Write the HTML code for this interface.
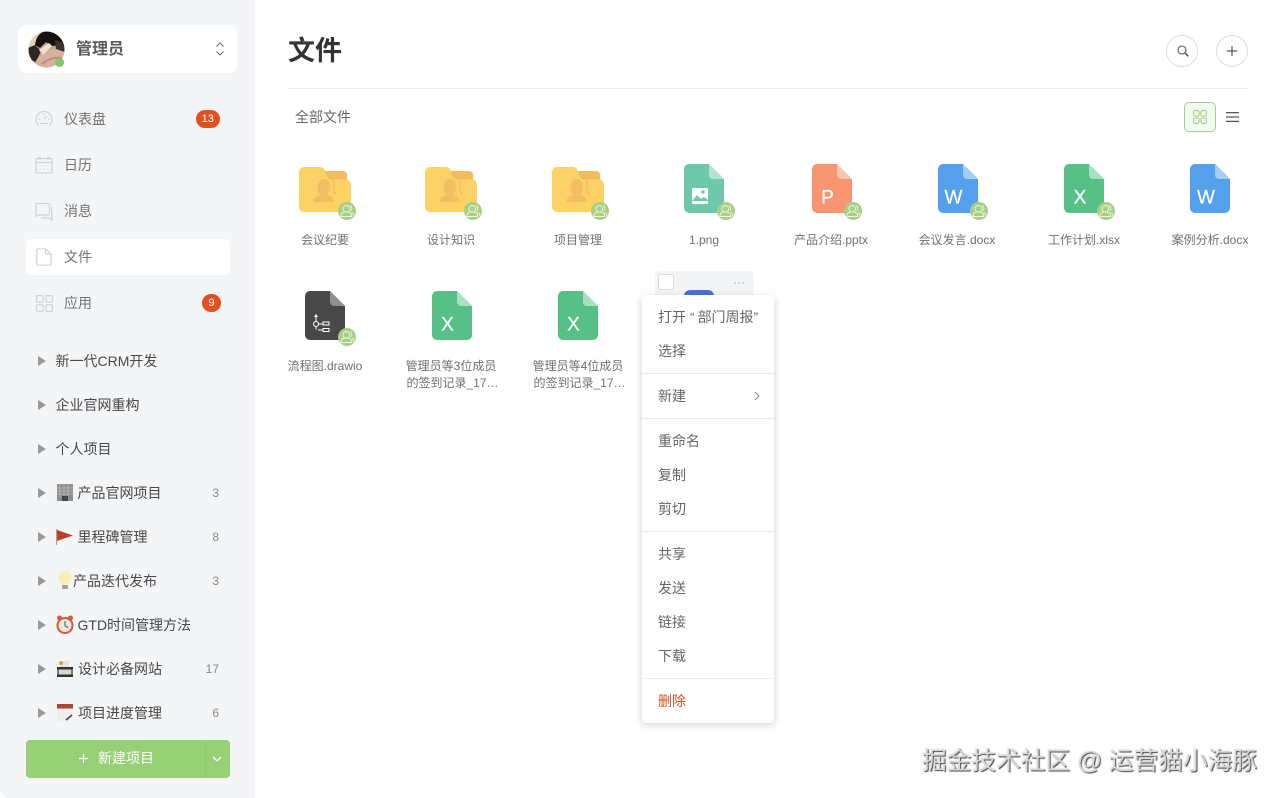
<!DOCTYPE html>
<html lang="zh">
<head>
<meta charset="utf-8">
<title>文件</title>
<style>
html,body{margin:0;padding:0;width:1280px;height:798px;overflow:hidden;background:#fff;font-family:"Liberation Sans","Noto Sans CJK SC",sans-serif;color:#555}
#w{position:absolute;left:0;top:0;width:1280px;height:798px;overflow:hidden;filter:blur(.3px)}
.a{position:absolute}
.t{position:absolute;white-space:nowrap;line-height:20px;height:20px}
.side{position:absolute;left:0;top:0;width:255px;height:798px;background:#f3f5f7;border-bottom-left-radius:10px}
.nav{font-size:14px;color:#737373;left:64px}
.prj{font-size:14px;color:#484848}
.cnt{font-size:12px;color:#8a8a8a;right:1061px;text-align:right}
.badge{position:absolute;background:#e3501f;color:#fff;font-size:11px;line-height:18px;height:18px;text-align:center;border-radius:9px}
.tri{position:absolute;left:38px;width:0;height:0;border-left:8px solid #999;border-top:5px solid transparent;border-bottom:5px solid transparent}
.lbl{position:absolute;width:126px;text-align:center;font-size:12px;color:#707070;line-height:17px;white-space:nowrap}
.lbl span{position:relative;left:1.500px}
.mi{position:absolute;left:16px;font-size:14px;color:#666;line-height:20px;white-space:nowrap}
.dv{position:absolute;left:0;width:132px;height:1px;background:#ebebeb}
svg{position:absolute;overflow:visible}
.letter{font-family:"Liberation Sans",sans-serif;font-size:19px;fill:#fff;stroke:#fff;stroke-width:.25;text-anchor:middle}
</style>
</head>
<body>
<div id="w">
<svg width="0" height="0" style="position:absolute">
<defs>
<symbol id="folder" viewBox="0 0 52 45" overflow="visible">
<path d="M26 4h18a4 4 0 0 1 4 4v8H26z" fill="#f3bb5c"/>
<path d="M5 0h15c3 0 5 1 6 4 1 5 3 8.500 6 8.500h15a5 5 0 0 1 5 5V40a5 5 0 0 1-5 5H5a5 5 0 0 1-5-5V5a5 5 0 0 1 5-5z" fill="#fcd267"/>
<path d="M14 35c.5-4 3-5.500 7.500-7.500-2-2-3-4-3-7.500 0-4.500 2.500-8 6.500-8 3.500 0 6 3 6 7 0 3.500-1 6.500-3 8.500 4 2 6.500 3.500 7 7.500z" fill="#f2be62"/>
<path d="M33 13c3 2 3 6 1 9M34 24c2 1 3 2 3.500 4" fill="none" stroke="#f2be62" stroke-width="1.500"/>
</symbol>
<symbol id="file" viewBox="0 0 40 49" overflow="visible">
<path d="M5 0h20l15 15v29a5 5 0 0 1-5 5H5a5 5 0 0 1-5-5V5a5 5 0 0 1 5-5z"/>
</symbol>
<symbol id="share" viewBox="0 0 18 18" overflow="visible">
<circle cx="9" cy="9" r="9" fill="#a9cf85"/>
<circle cx="8.300" cy="6.800" r="3.300" fill="none" stroke="#eef6e6" stroke-width=".9"/>
<path d="M2.800 14.500c0-3.400 2.500-4.700 5.500-4.700s5.500 1.300 5.500 4.700zM12.300 3.800c1.800.8 2 3.600.5 4.800M14.200 10.500c1.200.6 1.700 1.800 1.700 3.200" fill="none" stroke="#eef6e6" stroke-width=".9" stroke-linecap="round" stroke-linejoin="round"/>
</symbol>
</defs>
</svg>

<div class="side"></div>

<!-- user card -->
<div class="a" style="left:18px;top:25px;width:219px;height:48px;background:#fff;border-radius:9px"></div>
<svg style="left:28px;top:31px" width="37" height="37" viewBox="0 0 37 37">
<defs><clipPath id="av"><circle cx="18.500" cy="18.500" r="18"/></clipPath></defs>
<g clip-path="url(#av)">
<rect width="37" height="37" fill="#c4a28c"/>
<path d="M0 0h14L6 16 0 20z" fill="#e3d2bb"/>
<path d="M7 14C8 5 13 0 20 0h10c4 4 6 9 7 14l-14 1-5-4-6 6z" fill="#17110f"/>
<path d="M0 17l7-3 6 6-5 11-8-3z" fill="#2c2521"/>
<path d="M8 30c4-8 13-13 22-12l7 3v16H6z" fill="#d8b09c"/>
<path d="M27 9l10 3v9l-9-3z" fill="#3a302b"/>
<path d="M11 19l10-7 3 3-9 9z" fill="#efe2cf"/>
<path d="M14 33c6-5 13-7 20-6" stroke="#b98d7c" stroke-width="2" fill="none"/>
</g>
</svg>
<div class="a" style="left:55px;top:57.500px;width:9px;height:9px;background:#86c566;border-radius:50%"></div>
<div class="t" style="left:76px;top:40px;font-size:16px;font-weight:bold;color:#5c5c5c">管理员</div>
<svg style="left:215px;top:41px" width="10" height="16" viewBox="0 0 10 16" fill="none" stroke="#666" stroke-width="1"><path d="M1.500 5.500L5 2l3.500 3.500M1.500 10.500L5 14l3.500-3.500"/></svg>

<!-- nav -->
<div class="a" style="left:26px;top:239px;width:204px;height:36px;background:#fff;border-radius:5px"></div>
<svg style="left:35px;top:110px" width="18" height="18" viewBox="0 0 18 18" fill="none" stroke="#d0d3d6" stroke-width="1.200"><path d="M4 15.500C2 14 1 12 1 9.500A8 8 0 0 1 17 9.500c0 2.500-1 4.500-3 6"/><path d="M5 13.500h8M9 9l3-3M3.500 9H5M13 9h1.500M9 3.500V5"/></svg>
<svg style="left:35px;top:156px" width="18" height="18" viewBox="0 0 18 18" fill="none" stroke="#d0d3d6" stroke-width="1.200"><rect x="1" y="2.500" width="16" height="14.500" rx="1.500"/><path d="M1 6.500h16M5 .5v3.500M13 .5v3.500"/><path d="M4.500 10h1M8.500 10h1M12.500 10h1M4.500 13h1M8.500 13h1M12.500 13h1"/></svg>
<svg style="left:35px;top:202px" width="18" height="18" viewBox="0 0 18 18" fill="none" stroke="#d0d3d6" stroke-width="1.200"><path d="M2.500 1.500h10.500a1.500 1.500 0 0 1 1.500 1.500v8.500a1.500 1.500 0 0 1-1.500 1.500H3.500L1 14.500V3a1.500 1.500 0 0 1 1.500-1.500z"/><path d="M16.700 5v13l-2.200-2H6"/></svg>
<svg style="left:36px;top:248px" width="16" height="18" viewBox="0 0 16 18" fill="none" stroke="#d0d3d6" stroke-width="1.200"><path d="M2 .8h7.500L15 6.300V16a1.200 1.200 0 0 1-1.200 1.200H2A1.200 1.200 0 0 1 .8 16V2A1.200 1.200 0 0 1 2 .8zM9.500.8v4.300a1.200 1.200 0 0 0 1.200 1.200H15"/></svg>
<svg style="left:36px;top:295px" width="17" height="17" viewBox="0 0 17 17" fill="none" stroke="#d0d3d6" stroke-width="1.200"><rect x=".6" y=".6" width="6.500" height="6.500" rx="1"/><rect x="9.900" y=".6" width="6.500" height="6.500" rx="1"/><rect x=".6" y="9.900" width="6.500" height="6.500" rx="1"/><rect x="9.900" y="9.900" width="6.500" height="6.500" rx="1"/></svg>

<div class="t nav" style="top:109px">仪表盘</div>
<div class="t nav" style="top:155px">日历</div>
<div class="t nav" style="top:201px">消息</div>
<div class="t nav" style="top:247px">文件</div>
<div class="t nav" style="top:293px">应用</div>
<div class="badge" style="left:195.500px;top:110px;width:24.500px">13</div>
<div class="badge" style="left:202px;top:294px;width:19px">9</div>

<!-- projects -->
<div class="tri" style="top:356px"></div><div class="t prj" style="left:55.500px;top:351px">新一代CRM开发</div>
<div class="tri" style="top:400px"></div><div class="t prj" style="left:55.500px;top:395px">企业官网重构</div>
<div class="tri" style="top:444px"></div><div class="t prj" style="left:55.500px;top:439px">个人项目</div>
<div class="tri" style="top:488px"></div><div class="t prj" style="left:77.500px;top:483px">产品官网项目</div>
<div class="tri" style="top:532px"></div><div class="t prj" style="left:77.500px;top:527px">里程碑管理</div>
<div class="tri" style="top:576px"></div><div class="t prj" style="left:73px;top:571px">产品迭代发布</div>
<div class="tri" style="top:620px"></div><div class="t prj" style="left:77.500px;top:615px">GTD时间管理方法</div>
<div class="tri" style="top:664px"></div><div class="t prj" style="left:78px;top:659px">设计必备网站</div>
<div class="tri" style="top:708px"></div><div class="t prj" style="left:78px;top:703px">项目进度管理</div>

<svg style="left:57px;top:484px" width="16" height="17" viewBox="0 0 16 17"><rect width="16" height="17" fill="#8d8d8d"/><path d="M0 4h16M0 7h16M0 10h16M3 0v13M7 0v13M11 0v13" stroke="#b5b5b5" stroke-width="1"/><rect x="5" y="12" width="6" height="5" fill="#444"/></svg>
<svg style="left:56px;top:529px" width="17" height="16" viewBox="0 0 17 16"><path d="M1 1l16 5.500L1 12z" fill="#b83f2c"/><path d="M.7 0v16" stroke="#9a8a80" stroke-width="1"/></svg>
<svg style="left:58px;top:571px" width="14" height="19" viewBox="0 0 14 19"><path d="M7 0a6.500 6.500 0 0 1 3.500 12v2h-7v-2A6.500 6.500 0 0 1 7 0z" fill="#fbeeb0"/><rect x="4" y="14" width="6" height="4" rx="1" fill="#9aa4ae"/></svg>
<svg style="left:56px;top:615px" width="18" height="19" viewBox="0 0 18 19"><circle cx="9" cy="10.500" r="7.500" fill="#ece8e0" stroke="#d8563e" stroke-width="2"/><circle cx="3.500" cy="3" r="2.500" fill="#d8563e"/><circle cx="14.500" cy="3" r="2.500" fill="#d8563e"/><path d="M9 6v5l3 1.500" stroke="#555" stroke-width="1" fill="none"/></svg>
<svg style="left:57px;top:660px" width="16" height="18" viewBox="0 0 16 18"><path d="M3 2l9-2v7H3z" fill="#e8e4da"/><circle cx="4" cy="3" r="2" fill="#d9a040"/><rect x="1" y="8" width="14" height="8" fill="#dcd8d0"/><rect x="0" y="7" width="16" height="2.500" fill="#333"/><rect x="0" y="14.500" width="16" height="2.500" fill="#333"/><path d="M1 8v9M15 8v9" stroke="#333" stroke-width="1.200"/></svg>
<svg style="left:57px;top:704px" width="16" height="18" viewBox="0 0 16 18"><path d="M0 0h16v12l-5 6H0z" fill="#f0eeea"/><rect width="16" height="4.500" fill="#a5473b"/><path d="M9 16l6-5" stroke="#444" stroke-width="1.500"/></svg>

<div class="t cnt" style="top:483px">3</div>
<div class="t cnt" style="top:527px">8</div>
<div class="t cnt" style="top:571px">3</div>
<div class="t cnt" style="top:659px">17</div>
<div class="t cnt" style="top:703px">6</div>

<!-- new project -->
<div class="a" style="left:26px;top:740px;width:204px;height:38px;background:#97d077;border-radius:4px"></div>
<div class="a" style="left:205px;top:740px;width:1px;height:38px;background:#8fc96f"></div>
<svg style="left:78px;top:753px" width="11" height="11" viewBox="0 0 11 11" stroke="#fff" stroke-width="1.200"><path d="M5.500 1v9M1 5.500h9"/></svg>
<div class="t" style="left:98px;top:748px;font-size:14px;color:#fff">新建项目</div>
<svg style="left:212px;top:755px" width="10" height="8" viewBox="0 0 10 8" fill="none" stroke="#fff" stroke-width="1.300"><path d="M1 2l4 4 4-4"/></svg>

<!-- header -->
<div class="t" style="left:288px;top:33px;height:36px;line-height:36px;font-size:27px;font-weight:bold;color:#333">文件</div>
<div class="a" style="left:1166px;top:35px;width:30px;height:30px;border:1px solid #dedede;border-radius:50%"></div>
<div class="a" style="left:1216px;top:35px;width:30px;height:30px;border:1px solid #dedede;border-radius:50%"></div>
<svg style="left:1177px;top:45px" width="12" height="12" viewBox="0 0 12 12" fill="none" stroke="#555" stroke-width="1.100"><circle cx="5" cy="5" r="4"/><path d="M8 8l3.300 3.300" stroke-width="1.500"/></svg>
<svg style="left:1227px;top:46px" width="10" height="10" viewBox="0 0 10 10" stroke="#555" stroke-width="1.200"><path d="M5 0v10M0 5h10"/></svg>
<div class="a" style="left:288px;top:88px;width:960px;height:1px;background:#eeeeee"></div>
<div class="t" style="left:295px;top:107px;font-size:14px;color:#666">全部文件</div>
<div class="a" style="left:1184px;top:102px;width:30px;height:28px;border:1px solid #a5cf88;border-radius:5px;background:#f4f9f0"></div>
<svg style="left:1193px;top:110px" width="14" height="14" viewBox="0 0 14 14" fill="none" stroke="#a5cf88" stroke-width="1.100"><rect x=".6" y=".6" width="5.500" height="5.500" rx="1.700"/><rect x="7.900" y=".6" width="5.500" height="5.500" rx="1.700"/><rect x=".6" y="7.900" width="5.500" height="5.500" rx="1.700"/><rect x="7.900" y="7.900" width="5.500" height="5.500" rx="1.700"/></svg>
<svg style="left:1226px;top:112px" width="13" height="10" viewBox="0 0 13 10" stroke="#555" stroke-width="1.300"><path d="M0 .6h13M0 5h13M0 9.400h13"/></svg>

<!-- row 1 -->
<svg style="left:299px;top:167px" width="52" height="45"><use href="#folder" width="52" height="45"/></svg>
<svg style="left:338px;top:202px" width="18" height="18"><use href="#share" width="18" height="18"/></svg>
<svg style="left:425px;top:167px" width="52" height="45"><use href="#folder" width="52" height="45"/></svg>
<svg style="left:464px;top:202px" width="18" height="18"><use href="#share" width="18" height="18"/></svg>
<svg style="left:552px;top:167px" width="52" height="45"><use href="#folder" width="52" height="45"/></svg>
<svg style="left:591px;top:202px" width="18" height="18"><use href="#share" width="18" height="18"/></svg>

<svg style="left:684px;top:164px" width="40" height="49" viewBox="0 0 40 49"><use href="#file" width="40" height="49" fill="#6dc9a9"/><path d="M25 0l15 15H29a4 4 0 0 1-4-4z" fill="#b5e3d2"/><rect x="8" y="24" width="16" height="16" rx="1" fill="#fff"/><circle cx="19" cy="28" r="1.700" fill="#6dc9a9"/><path d="M8 37l5-6 4 4 3-2 4 3v1H8z" fill="#6dc9a9"/></svg>
<svg style="left:717px;top:202px" width="18" height="18"><use href="#share" width="18" height="18"/></svg>

<svg style="left:811.500px;top:164px" width="40" height="49" viewBox="0 0 40 49"><use href="#file" width="40" height="49" fill="#f69570"/><path d="M25 0l15 15H29a4 4 0 0 1-4-4z" fill="#f9c6b0"/><text class="letter" x="15.500" y="39.500">P</text></svg>
<svg style="left:844px;top:202px" width="18" height="18"><use href="#share" width="18" height="18"/></svg>

<svg style="left:937.500px;top:164px" width="40" height="49" viewBox="0 0 40 49"><use href="#file" width="40" height="49" fill="#55a0ec"/><path d="M25 0l15 15H29a4 4 0 0 1-4-4z" fill="#a5cdf5"/><text class="letter" x="15.500" y="39.500">W</text></svg>
<svg style="left:970px;top:202px" width="18" height="18"><use href="#share" width="18" height="18"/></svg>

<svg style="left:1064px;top:164px" width="40" height="49" viewBox="0 0 40 49"><use href="#file" width="40" height="49" fill="#56c087"/><path d="M25 0l15 15H29a4 4 0 0 1-4-4z" fill="#a9e0c1"/><text class="letter" x="16" y="39.500">X</text></svg>
<svg style="left:1097px;top:202px" width="18" height="18"><use href="#share" width="18" height="18"/></svg>

<svg style="left:1190px;top:164px" width="40" height="49" viewBox="0 0 40 49"><use href="#file" width="40" height="49" fill="#55a0ec"/><path d="M25 0l15 15H29a4 4 0 0 1-4-4z" fill="#a5cdf5"/><text class="letter" x="16" y="39.500">W</text></svg>

<div class="lbl" style="left:262px;top:232px">会议纪要</div>
<div class="lbl" style="left:388px;top:232px">设计知识</div>
<div class="lbl" style="left:515px;top:232px">项目管理</div>
<div class="lbl" style="left:641px;top:232px">1.png</div>
<div class="lbl" style="left:768px;top:232px">产品介绍.pptx</div>
<div class="lbl" style="left:894px;top:232px">会议发言.docx</div>
<div class="lbl" style="left:1021px;top:232px">工作计划.xlsx</div>
<div class="lbl" style="left:1147px;top:232px">案例分析.docx</div>

<!-- row 2 -->
<svg style="left:305px;top:291px" width="40" height="49" viewBox="0 0 40 49"><use href="#file" width="40" height="49" fill="#484848"/><path d="M25 0l15 15H29a4 4 0 0 1-4-4z" fill="#8f8f8f"/><g fill="none" stroke="#fff" stroke-width="1"><path d="M11 25v5.500M11 35.500v3M13.500 33H18M13 39H18"/><circle cx="11" cy="33" r="2.500"/><rect x="18" y="31" width="6" height="3"/><rect x="18" y="37.500" width="6" height="3"/></g><path d="M11 23l2 3H9z" fill="#fff"/></svg>
<svg style="left:338px;top:328px" width="18" height="18"><use href="#share" width="18" height="18"/></svg>
<svg style="left:431.500px;top:291px" width="40" height="49" viewBox="0 0 40 49"><use href="#file" width="40" height="49" fill="#56c087"/><path d="M25 0l15 15H29a4 4 0 0 1-4-4z" fill="#a9e0c1"/><text class="letter" x="15.500" y="39.500">X</text></svg>
<svg style="left:558px;top:291px" width="40" height="49" viewBox="0 0 40 49"><use href="#file" width="40" height="49" fill="#56c087"/><path d="M25 0l15 15H29a4 4 0 0 1-4-4z" fill="#a9e0c1"/><text class="letter" x="15.500" y="39.500">X</text></svg>

<div class="lbl" style="left:262px;top:358px">流程图.drawio</div>
<div class="lbl" style="left:388px;top:358px">管理员等3位成员<br><span>的签到记录_17…</span></div>
<div class="lbl" style="left:515px;top:358px">管理员等4位成员<br><span>的签到记录_17…</span></div>

<!-- hovered card -->
<div class="a" style="left:655px;top:271px;width:99px;height:60px;background:#f3f5f7;border-radius:4px"></div>
<div class="a" style="left:658px;top:274px;width:14px;height:14px;background:#fff;border:1px solid #dcdcdc;border-radius:2px"></div>
<div class="a" style="left:684px;top:290px;width:30px;height:20px;background:#4a6fe0;border-radius:6px 6px 0 0"></div>
<svg style="left:734px;top:282px" width="10" height="2" viewBox="0 0 10 2" fill="#aaa"><circle cx="1" cy="1" r=".8"/><circle cx="5" cy="1" r=".8"/><circle cx="9" cy="1" r=".8"/></svg>

<!-- menu -->
<div class="a" style="left:642px;top:295px;width:132px;height:428px;background:#fff;border-radius:4px;box-shadow:0 2px 8px rgba(0,0,0,.18)">
<div class="mi" style="top:12px">打开 <span style="letter-spacing:3px">“</span>部门周报”</div>
<div class="mi" style="top:46px">选择</div>
<div class="dv" style="top:78px"></div>
<div class="mi" style="top:91px">新建</div>
<svg style="left:112px;top:96px" width="6" height="10" viewBox="0 0 6 10" fill="none" stroke="#888" stroke-width="1"><path d="M1 1l4 4-4 4"/></svg>
<div class="dv" style="top:123px"></div>
<div class="mi" style="top:136px">重命名</div>
<div class="mi" style="top:170px">复制</div>
<div class="mi" style="top:204px">剪切</div>
<div class="dv" style="top:236px"></div>
<div class="mi" style="top:249px">共享</div>
<div class="mi" style="top:283px">发送</div>
<div class="mi" style="top:317px">链接</div>
<div class="mi" style="top:351px">下载</div>
<div class="dv" style="top:383px"></div>
<div class="mi" style="top:396px;color:#d9501e">删除</div>
</div>

<!-- watermark -->
<div class="t" style="left:922px;top:746px;height:32px;line-height:32px;font-size:24.700px;color:#d8d8d8;text-shadow:1px 1px 1px #444,-1px -1px 0 #f4f4f4">掘金技术社区 @ 运营猫小海豚</div>
</div>
</body>
</html>
